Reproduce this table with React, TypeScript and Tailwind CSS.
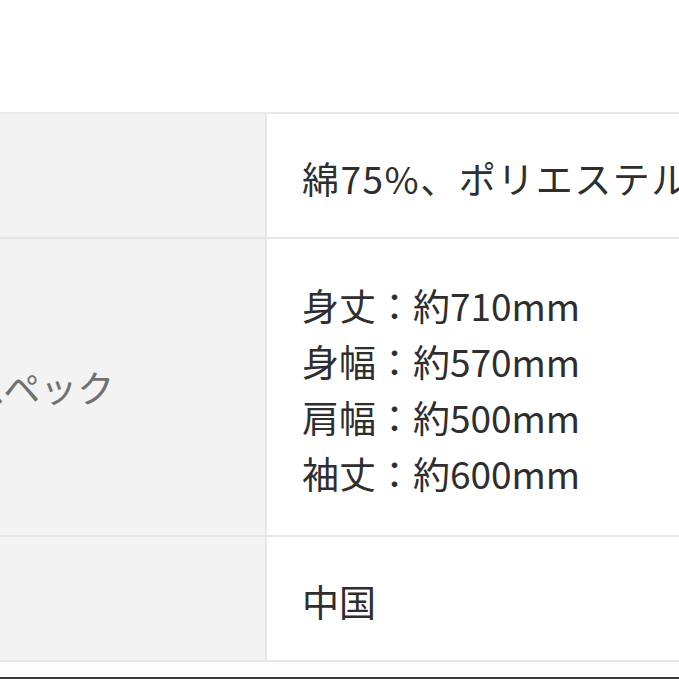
import React from 'react';

const rows = [
    { label: '素材', value: ['綿75%、ポリエステル25%'], wide: true },
    { label: 'サイズ・スペック', value: ['身丈：約710mm', '身幅：約570mm', '肩幅：約500mm', '袖丈：約600mm'], wide: false },
    { label: '原産国', value: ['中国'], wide: false },
];

export default function App() {
    return (
        <div
            className="w-[679px] h-[679px] overflow-hidden bg-white flex flex-col"
            style={{ fontFamily: '"Noto Sans CJK JP", "Noto Sans", sans-serif' }}
        >
            {/* empty space above the table */}
            <div className="h-[112px] shrink-0" />

            {/* spec table, shifted left: the screenshot is cropped */}
            <div className="-ml-[66px] w-[900px] border-t-2 border-[#e9e9e9]">
                {rows.map((row, i) => (
                    <div
                        key={i}
                        className={`grid grid-cols-[333px_1fr] border-b-2 border-[#e6e6e6] ${
                            i === 1 ? 'h-[298px]' : 'h-[125px]'
                        }`}
                    >
                        <div className="bg-[#f3f3f3] border-r-2 border-[#e6e6e6] flex items-center">
                            <span className="-ml-[112px] text-[37px] leading-none text-[#717171] whitespace-nowrap">
                                {row.label}
                            </span>
                        </div>
                        <div className="flex flex-col justify-center pl-[35px] pt-[4px]">
                            {row.value.map((line, j) => (
                                <p
                                    key={j}
                                    className={`text-[37px] leading-[56px] text-[#2e2e2e] whitespace-nowrap ${
                                        row.wide ? 'tracking-[1.5px]' : ''
                                    }`}
                                >
                                    {line}
                                </p>
                            ))}
                        </div>
                    </div>
                ))}
            </div>

            <div className="flex-1 bg-[#fdfdfd]" />
            <div className="h-[2px] bg-[#3a3a3a]" />
        </div>
    );
}
